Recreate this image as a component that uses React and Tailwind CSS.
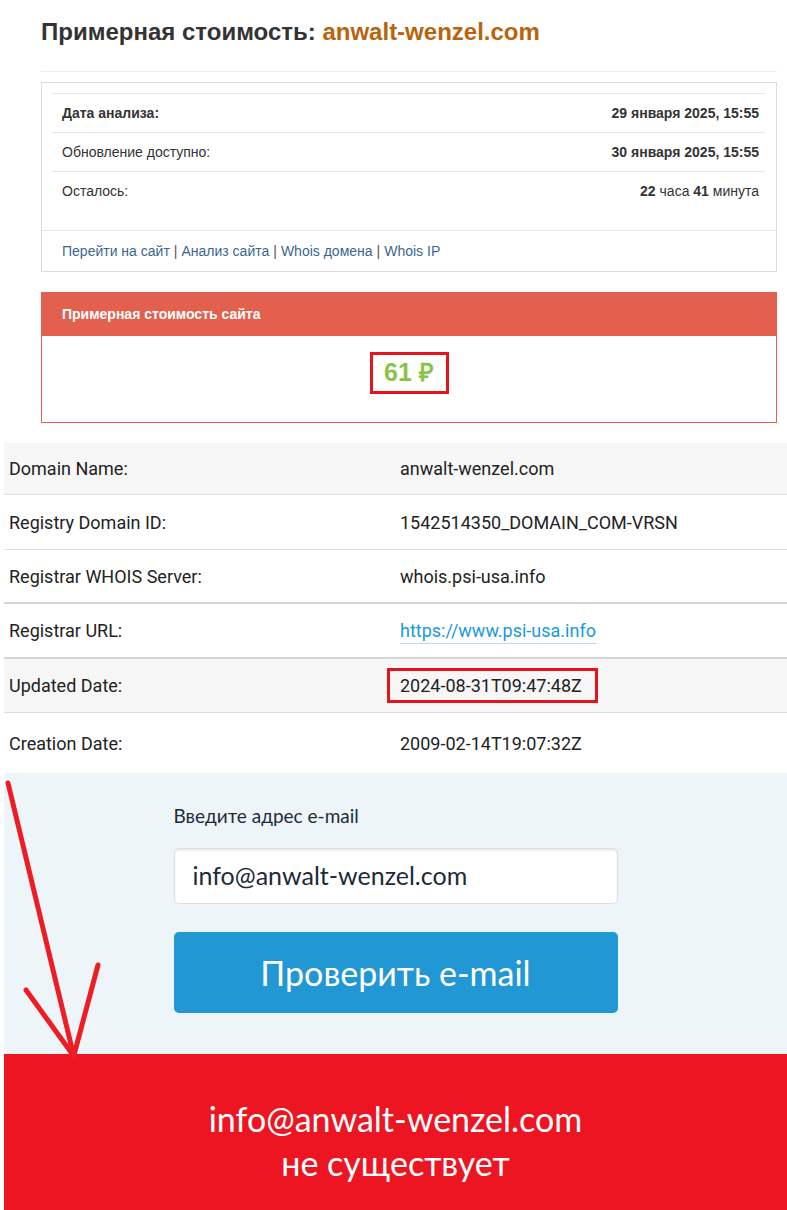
import React from "react";

const arial = { fontFamily: '"Liberation Sans", Arial, sans-serif' };
const roboto = { fontFamily: 'Roboto, "Liberation Sans", sans-serif' };
const lato = { fontFamily: 'Lato, "Open Sans", sans-serif' };

function CardRow({ label, value, boldLabel }) {
  return (
    <div className="flex h-[39px] items-center justify-between border-t border-[#e6e6e6] pl-[10px] pr-[6px] text-[14px] text-[#333]">
      <span className={boldLabel ? "font-bold" : ""}>{label}</span>
      <span>{value}</span>
    </div>
  );
}

function WhoisRow({ label, children, bg, border, h }) {
  return (
    <div className={`grid grid-cols-[396px_1fr] items-center ${bg} ${border} ${h}`}>
      <div className="pl-[5px]">{label}</div>
      <div>{children}</div>
    </div>
  );
}

export default function App() {
  return (
    <div className="relative w-[787px] bg-white overflow-hidden">
      {/* top area */}
      <div className="pl-[41px] pr-[10px] pt-[16px]" style={arial}>
        <h1 className="text-[24px] font-bold leading-[32px] text-[#333]">
          Примерная стоимость: <span className="text-[#b8640c]">anwalt-wenzel.com</span>
        </h1>
        <div className="mt-[23px] border-t border-[#eeeeee]" />
        <div className="mt-[10px] border border-[#dddddd] bg-white">
          <div className="pt-[10px] pl-[10px] pr-[11px] pb-[20px]">
            <CardRow label="Дата анализа:" boldLabel value={<b>29 января 2025, 15:55</b>} />
            <CardRow label="Обновление доступно:" value={<b>30 января 2025, 15:55</b>} />
            <CardRow
              label="Осталось:"
              value={
                <>
                  <b>22</b> часа <b>41</b> минута
                </>
              }
            />
          </div>
          <div className="flex h-[41px] items-center border-t border-[#e6e6e6] pl-[20px] text-[14px] text-[#555]">
            <span className="text-[#3a6690]">Перейти на сайт</span>
            <span className="mx-[4px]">|</span>
            <span className="text-[#3a6690]">Анализ сайта</span>
            <span className="mx-[4px]">|</span>
            <span className="text-[#3a6690]">Whois домена</span>
            <span className="mx-[4px]">|</span>
            <span className="text-[#3a6690]">Whois IP</span>
          </div>
        </div>

        <div className="mt-[20px] border border-[#e3604f]">
          <div className="flex h-[43px] items-center bg-[#e3604f] pl-[20px] text-[14px] font-bold text-white">
            Примерная стоимость сайта
          </div>
          <div className="flex justify-center pt-[16px] pb-[28px]">
            <div className="flex h-[42px] w-[79px] items-center justify-center border-[3px] border-[#e4141e] text-[25px] font-bold text-[#8bc34a]">
              61 ₽
            </div>
          </div>
        </div>
      </div>

      {/* whois table */}
      <div className="mt-[20px] pl-[4px] text-[18px] text-[#222]" style={roboto}>
        <WhoisRow label="Domain Name:" bg="bg-[#f7f7f7]" border="border-b border-[#dddddd]" h="h-[52px]">
          anwalt-wenzel.com
        </WhoisRow>
        <WhoisRow label="Registry Domain ID:" bg="bg-white" border="border-b border-[#dddddd]" h="h-[55px]">
          1542514350_DOMAIN_COM-VRSN
        </WhoisRow>
        <WhoisRow label="Registrar WHOIS Server:" bg="bg-white" border="border-b-2 border-[#d6d6d6]" h="h-[54px]">
          whois.psi-usa.info
        </WhoisRow>
        <WhoisRow label="Registrar URL:" bg="bg-white" border="border-b-2 border-[#d6d6d6]" h="h-[55px]">
          <span className="border-b border-[#b3dcf0] pb-[2px] text-[#1a9ad6]">https://www.psi-usa.info</span>
        </WhoisRow>
        <WhoisRow label="Updated Date:" bg="bg-[#f7f7f7]" border="border-b border-[#dddddd]" h="h-[54px]">
          <span className="-ml-[13px] inline-flex h-[35px] w-[211px] items-center border-[3px] border-[#e4141e] pl-[10px]">
            2024-08-31T09:47:48Z
          </span>
        </WhoisRow>
        <WhoisRow label="Creation Date:" bg="bg-white" border="" h="h-[60px]">
          2009-02-14T19:07:32Z
        </WhoisRow>
      </div>

      {/* email checker */}
      <div className="pl-[4px]" style={lato}>
        <div className="bg-[#eef5f9] pt-[31px] pb-[41px]">
          <div className="mx-auto w-[444px]">
            <div className="text-[19px] leading-[24px] text-[#1c2b39]">Введите адрес e-mail</div>
            <div className="mt-[20px] flex h-[56px] items-center rounded-[5px] border border-[#dcdfe2] bg-white pl-[18px] text-[25px] text-[#1c2b39] shadow-[inset_0_2px_2px_rgba(0,0,0,0.08)]">
              info@anwalt-wenzel.com
            </div>
            <div className="mt-[28px] flex h-[81px] items-center justify-center rounded-[5px] bg-[#2198d4] text-[34px] text-white">
              Проверить e-mail
            </div>
          </div>
        </div>
        <div className="h-[160px] bg-[#ee1522] pt-[43px] text-center text-[34px] leading-[44px] text-white">
          <div>info@anwalt-wenzel.com</div>
          <div>не существует</div>
        </div>
      </div>

      {/* annotation arrow */}
      <svg
        className="pointer-events-none absolute left-0 top-0"
        width="787"
        height="1210"
        viewBox="0 0 787 1210"
      >
        <g stroke="#ee1c24" strokeWidth="5" strokeLinecap="round" fill="none">
          <line x1="8" y1="783" x2="74" y2="1057" />
          <line x1="26" y1="990" x2="73" y2="1055" />
          <line x1="98" y1="965" x2="74" y2="1055" />
        </g>
      </svg>
    </div>
  );
}
